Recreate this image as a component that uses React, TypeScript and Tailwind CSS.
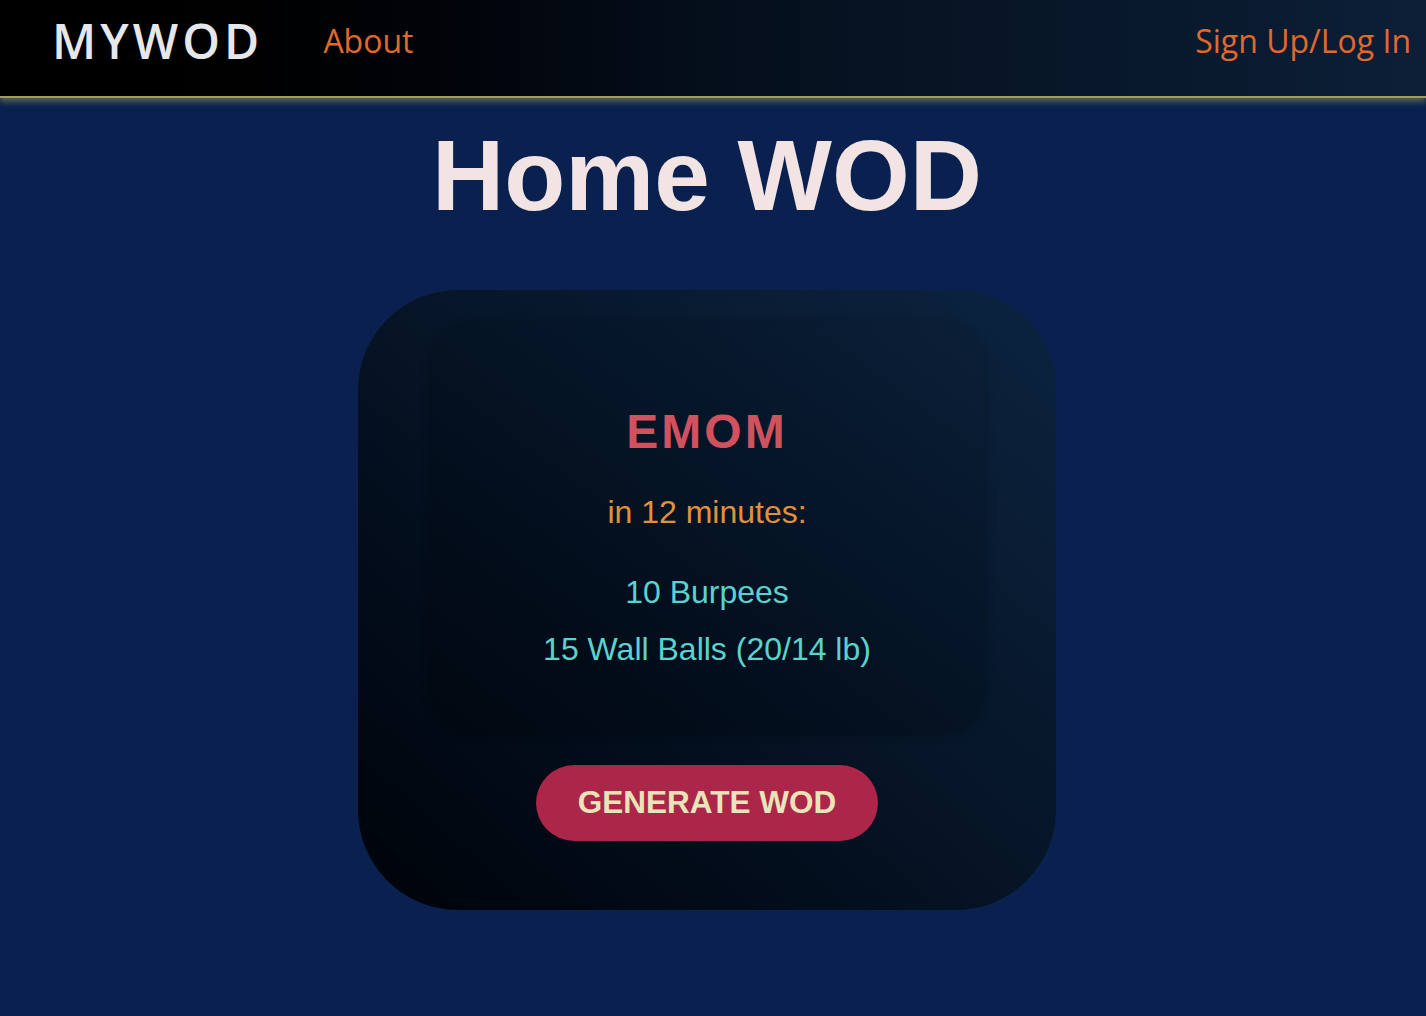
import React from "react";

const workout = {
  type: "EMOM",
  duration: "in 12 minutes:",
  movements: ["10 Burpees", "15 Wall Balls (20/14 lb)"],
};

const NavBar = () => (
  <header className="relative z-10 flex h-[98px] items-center border-b-2 border-[#a09d5c] bg-gradient-to-r from-black via-[#050f1c] to-[#0c1f37] pb-[14px] pl-[52px] pr-[15px] shadow-[0_4px_6px_rgba(150,147,90,0.55)]">
    <span className="font-['Open_Sans',sans-serif] text-[48px] font-semibold tracking-[0.085em] text-[#e5e7eb]">
      MYWOD
    </span>
    <a className="ml-[60px] font-['Open_Sans',sans-serif] text-[32px] text-[#e0692f]">About</a>
    <a className="ml-auto font-['Open_Sans',sans-serif] text-[32px] text-[#e0692f]">Sign Up/Log In</a>
  </header>
);

const WodCard = () => (
  <div className="flex w-[698px] flex-col items-center rounded-[100px] bg-gradient-to-tr from-[#00040a] via-[#061426] to-[#0c2440] px-[71px] pb-[69px] pt-[33px]">
    <div className="flex w-full flex-col items-center rounded-[44px] bg-gradient-to-tr from-[#010710] to-[#0b1f38] pb-[70px] pt-[85px] shadow-[0_0_8px_rgba(0,0,0,0.25)]">
      <h2 className="text-[48px] font-bold leading-none tracking-[3px] text-[#d1515f]">{workout.type}</h2>
      <p className="mt-[40px] text-[32px] leading-none text-[#e0913a]">{workout.duration}</p>
      <ul className="mt-[48px] flex flex-col items-center gap-[25px]">
        {workout.movements.map((m) => (
          <li key={m} className="text-[32px] leading-none text-[#5ad3cf]">
            {m}
          </li>
        ))}
      </ul>
    </div>
    <button className="mt-[30px] h-[76px] rounded-full bg-[#ab2649] px-[42px] text-[31.5px] font-bold text-[#e9e4b9]">
      GENERATE WOD
    </button>
  </div>
);

export default function App() {
  return (
    <div className="min-h-screen bg-[#0a2150] font-['Liberation_Sans',Arial,sans-serif]">
      <NavBar />
      <main className="flex flex-col items-center pr-[12px]">
        <h1 className="mt-[27px] text-[100px] font-bold leading-none text-[#f3e4e4]">Home WOD</h1>
        <div className="mt-[65px]">
          <WodCard />
        </div>
      </main>
    </div>
  );
}
